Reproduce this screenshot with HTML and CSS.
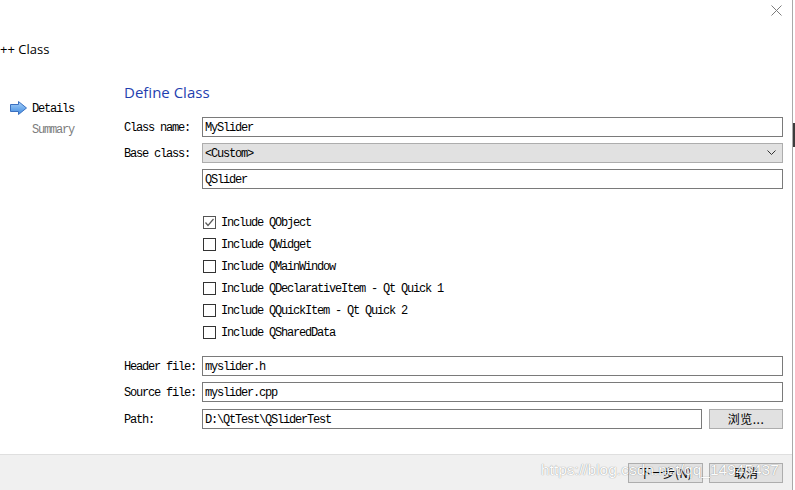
FILE: index.html
```html
<!DOCTYPE html>
<html lang="en">
<head>
<meta charset="utf-8">
<title>C++ Class</title>
<link rel="stylesheet" href="styles.css">
</head>
<body>
<div class="window">
  <div class="titlebar">
    <span class="close" aria-label="Close">
      <svg width="11" height="11" viewBox="0 0 11 11"><path d="M0.5 0.5 L10.5 10.5 M10.5 0.5 L0.5 10.5" stroke="#7c7c7c" stroke-width="1" fill="none"/></svg>
    </span>
  </div>
  <div class="wizard-title">++ Class</div>
  <div class="main">
    <nav class="steps">
      <div class="step current">
        <svg class="arrow" width="17" height="14" viewBox="0 0 17 14">
          <defs>
            <linearGradient id="ag" x1="0" y1="0" x2="0" y2="1">
              <stop offset="0" stop-color="#a9d2fa"/>
              <stop offset="1" stop-color="#3f8ae0"/>
            </linearGradient>
          </defs>
          <path d="M0.5 3.5 H8.5 V0.5 L16.5 7 L8.5 13.5 V10.5 H0.5 Z" fill="url(#ag)" stroke="#3b70c0" stroke-width="1" stroke-linejoin="round"/>
        </svg>
        <span>Details</span>
      </div>
      <div class="step">Summary</div>
    </nav>
    <section class="page">
      <h1 class="page-title">Define Class</h1>
      <div class="form">
        <label class="lbl">Class name:</label>
        <div class="field">MySlider</div>
        <label class="lbl">Base class:</label>
        <div class="combo">
          <span>&lt;Custom&gt;</span>
          <svg width="9" height="6" viewBox="0 0 9 6"><path d="M0.5 0.5 L4.5 4.5 L8.5 0.5" stroke="#333" stroke-width="1" fill="none"/></svg>
        </div>
        <span></span>
        <div class="field">QSlider</div>
      </div>
      <div class="checks">
        <div class="check"><span class="box checked"><svg width="11" height="11" viewBox="0 0 11 11"><path d="M1.5 5.5 L4 8.5 L9.5 2" stroke="#5a5a5a" stroke-width="1.2" fill="none"/></svg></span><span>Include QObject</span></div>
        <div class="check"><span class="box"></span><span>Include QWidget</span></div>
        <div class="check"><span class="box"></span><span>Include QMainWindow</span></div>
        <div class="check"><span class="box"></span><span>Include QDeclarativeItem - Qt Quick 1</span></div>
        <div class="check"><span class="box"></span><span>Include QQuickItem - Qt Quick 2</span></div>
        <div class="check"><span class="box"></span><span>Include QSharedData</span></div>
      </div>
      <div class="form form2">
        <label class="lbl">Header file:</label>
        <div class="field">myslider.h</div>
        <label class="lbl">Source file:</label>
        <div class="field">myslider.cpp</div>
        <label class="lbl path-row">Path:</label>
        <div class="path path-row">
          <div class="field grow">D:\QtTest\QSliderTest</div>
          <button class="btn browse">浏览...</button>
        </div>
      </div>
    </section>
  </div>
  <footer class="footer">
    <button class="btn next">下一步(<u>N</u>)</button>
    <button class="btn cancel">取消</button>
  </footer>
</div>
<div class="watermark">https://blog.csdn.net/qq_14945437</div>
<div class="edge-thumb"></div>
</body>
</html>
```

FILE: styles.css
```css
html, body {
  margin: 0;
  padding: 0;
}
body {
  width: 795px;
  height: 490px;
  background: #ffffff;
  position: relative;
  overflow: hidden;
  font-family: "Liberation Mono", "Courier New", monospace;
  font-size: 12px;
  color: #000;
}
.window {
  width: 792px;
  height: 490px;
  border-right: 1px solid #a9a9a9;
  display: flex;
  flex-direction: column;
  background: #fff;
}
.titlebar {
  height: 40px;
  display: flex;
  justify-content: flex-end;
  align-items: flex-start;
  padding: 5px 10px 0 0;
  box-sizing: border-box;
}
.close {
  display: block;
  width: 11px;
  height: 11px;
}
.close svg { display: block; }
.wizard-title {
  font-family: "Open Sans", sans-serif;
  font-size: 13px;
  line-height: 18px;
  height: 18px;
  color: #000;
}
.main {
  flex: 1;
  display: flex;
}
.steps {
  width: 124px;
  padding-top: 39px;
  box-sizing: border-box;
  flex: none;
}
.step {
  height: 22px;
  line-height: 23px;
  padding-left: 32px;
  letter-spacing: -1.2px;
  color: #7d7d7d;
}
.step.current {
  display: flex;
  align-items: center;
  gap: 5px;
  padding-left: 10px;
  color: #000;
}
.step.current span { padding-top: 2px; line-height: 20px; }
.arrow { display: block; flex: none; }
.page {
  flex: 1;
  padding: 24px 9px 0 0;
  display: flex;
  flex-direction: column;
}
.page-title {
  margin: 0;
  font-family: "Open Sans", sans-serif;
  font-weight: normal;
  font-size: 15px;
  line-height: 20px;
  height: 20px;
  color: #1f3fb0;
}
.form {
  margin-top: 15px;
  display: grid;
  grid-template-columns: 78px 1fr;
  grid-auto-rows: 20px;
  row-gap: 6px;
}
.form2 { margin-top: 13px; }
.lbl {
  line-height: 22px;
  letter-spacing: -1.2px;
  white-space: nowrap;
}
.field {
  height: 20px;
  box-sizing: border-box;
  border: 1px solid #7a7a7a;
  background: #fff;
  line-height: 19px;
  padding: 1px 0 0 2px;
  letter-spacing: -1.2px;
  white-space: nowrap;
  overflow: hidden;
}
.combo {
  height: 20px;
  box-sizing: border-box;
  border: 1px solid #adadad;
  background: #e1e1e1;
  display: flex;
  align-items: center;
  justify-content: space-between;
  padding: 0 6px 0 2px;
  letter-spacing: -1.2px;
}
.combo span { padding-top: 2px; }
.combo svg { display: block; }
.checks {
  margin-top: 22px;
  padding-left: 79px;
  display: flex;
  flex-direction: column;
}
.check {
  height: 22px;
  display: flex;
  align-items: center;
  gap: 5px;
  letter-spacing: -1.2px;
  white-space: nowrap;
}
.check span:last-child { padding-top: 2px; }
.box {
  width: 13px;
  height: 13px;
  box-sizing: border-box;
  border: 1px solid #333;
  background: #fff;
  flex: none;
  display: flex;
  align-items: center;
  justify-content: center;
}
.box.checked { border-color: #555; }
.box svg { display: block; }
.path-row { margin-top: 1px; }
.path {
  display: flex;
  gap: 7px;
}
.grow { flex: 1; }
.btn {
  height: 20px;
  box-sizing: border-box;
  border: 1px solid #adadad;
  background: #e1e1e1;
  font-family: "Noto Sans CJK SC", sans-serif;
  font-size: 12px;
  line-height: 16px;
  color: #000;
  padding: 0;
  margin: 0;
}
.browse { width: 74px; letter-spacing: 0.5px; }
.footer {
  height: 36px;
  box-sizing: border-box;
  border-top: 1px solid #dfdfdf;
  background: #f0f0f0;
  display: flex;
  justify-content: flex-end;
  align-items: flex-start;
  gap: 6px;
  padding: 8px 9px 0 0;
}
.next { width: 75px; }
.next u { text-decoration: none; }
.cancel { width: 74px; }
.watermark {
  position: absolute;
  left: 541px;
  top: 461px;
  font-family: "Liberation Sans", sans-serif;
  font-size: 15.5px;
  line-height: 18px;
  color: #ffffff;
  text-shadow: 0 0 1px rgba(0,0,0,0.35), 0 0 1px rgba(0,0,0,0.25);
  opacity: 0.9;
  white-space: nowrap;
}
.edge-thumb {
  position: absolute;
  left: 793px;
  top: 123px;
  width: 2px;
  height: 24px;
  background: #3c3c3c;
}
```
